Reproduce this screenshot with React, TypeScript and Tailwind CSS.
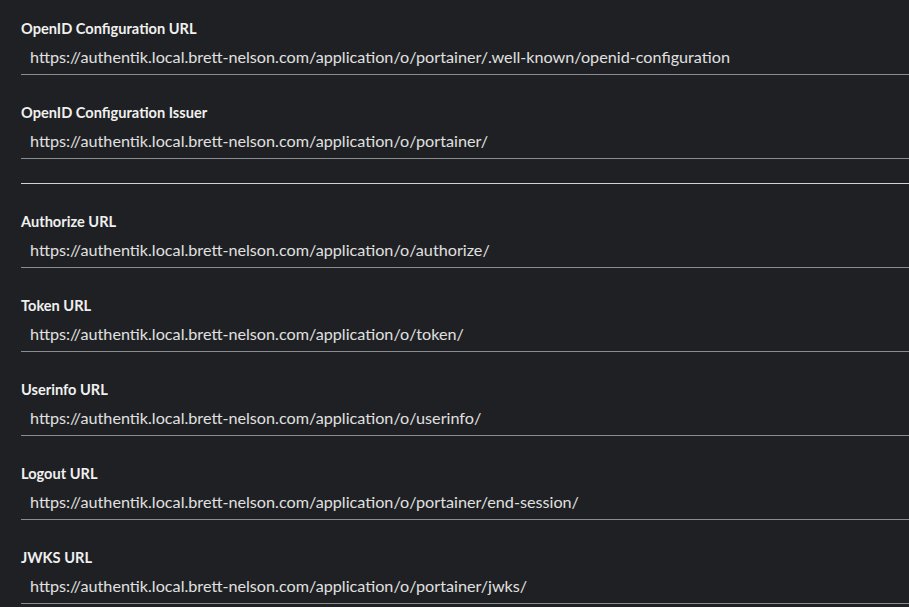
const FIELDS_TOP = [
  {
    label: "OpenID Configuration URL",
    value: "https://authentik.local.brett-nelson.com/application/o/portainer/.well-known/openid-configuration",
  },
  {
    label: "OpenID Configuration Issuer",
    value: "https://authentik.local.brett-nelson.com/application/o/portainer/",
  },
];

const FIELDS_BOTTOM = [
  { label: "Authorize URL", value: "https://authentik.local.brett-nelson.com/application/o/authorize/" },
  { label: "Token URL", value: "https://authentik.local.brett-nelson.com/application/o/token/" },
  { label: "Userinfo URL", value: "https://authentik.local.brett-nelson.com/application/o/userinfo/" },
  { label: "Logout URL", value: "https://authentik.local.brett-nelson.com/application/o/portainer/end-session/" },
  { label: "JWKS URL", value: "https://authentik.local.brett-nelson.com/application/o/portainer/jwks/" },
];

function ReadonlyField({ label, value }: { label: string; value: string }) {
  return (
    <div className="flex flex-col">
      <label className="h-[21px] text-[14.6px] leading-[21px] font-bold text-[#f0f0f0]">{label}</label>
      <div className="flex h-[36px] items-center border-b border-[#8a8d90] pl-[9px] pt-[2px] text-[16.2px] text-[#e0e0e0]">
        <span className="whitespace-nowrap">{value}</span>
      </div>
    </div>
  );
}

export default function App() {
  return (
    <div
      className="h-[607px] w-[909px] overflow-hidden bg-[#1f2023]"
      style={{ fontFamily: 'Lato, "Noto Sans", sans-serif' }}
    >
      <div className="-mr-10 flex flex-col gap-[27px] pl-[21px] pt-[18px]">
        {FIELDS_TOP.map((f) => (
          <ReadonlyField key={f.label} {...f} />
        ))}
      </div>
      <div className="-mr-10 ml-[21px] h-[25px] border-b border-[#d2d2d2]" />
      <div className="-mr-10 flex flex-col gap-[27px] pl-[21px] pt-[27px]">
        {FIELDS_BOTTOM.map((f) => (
          <ReadonlyField key={f.label} {...f} />
        ))}
      </div>
    </div>
  );
}
